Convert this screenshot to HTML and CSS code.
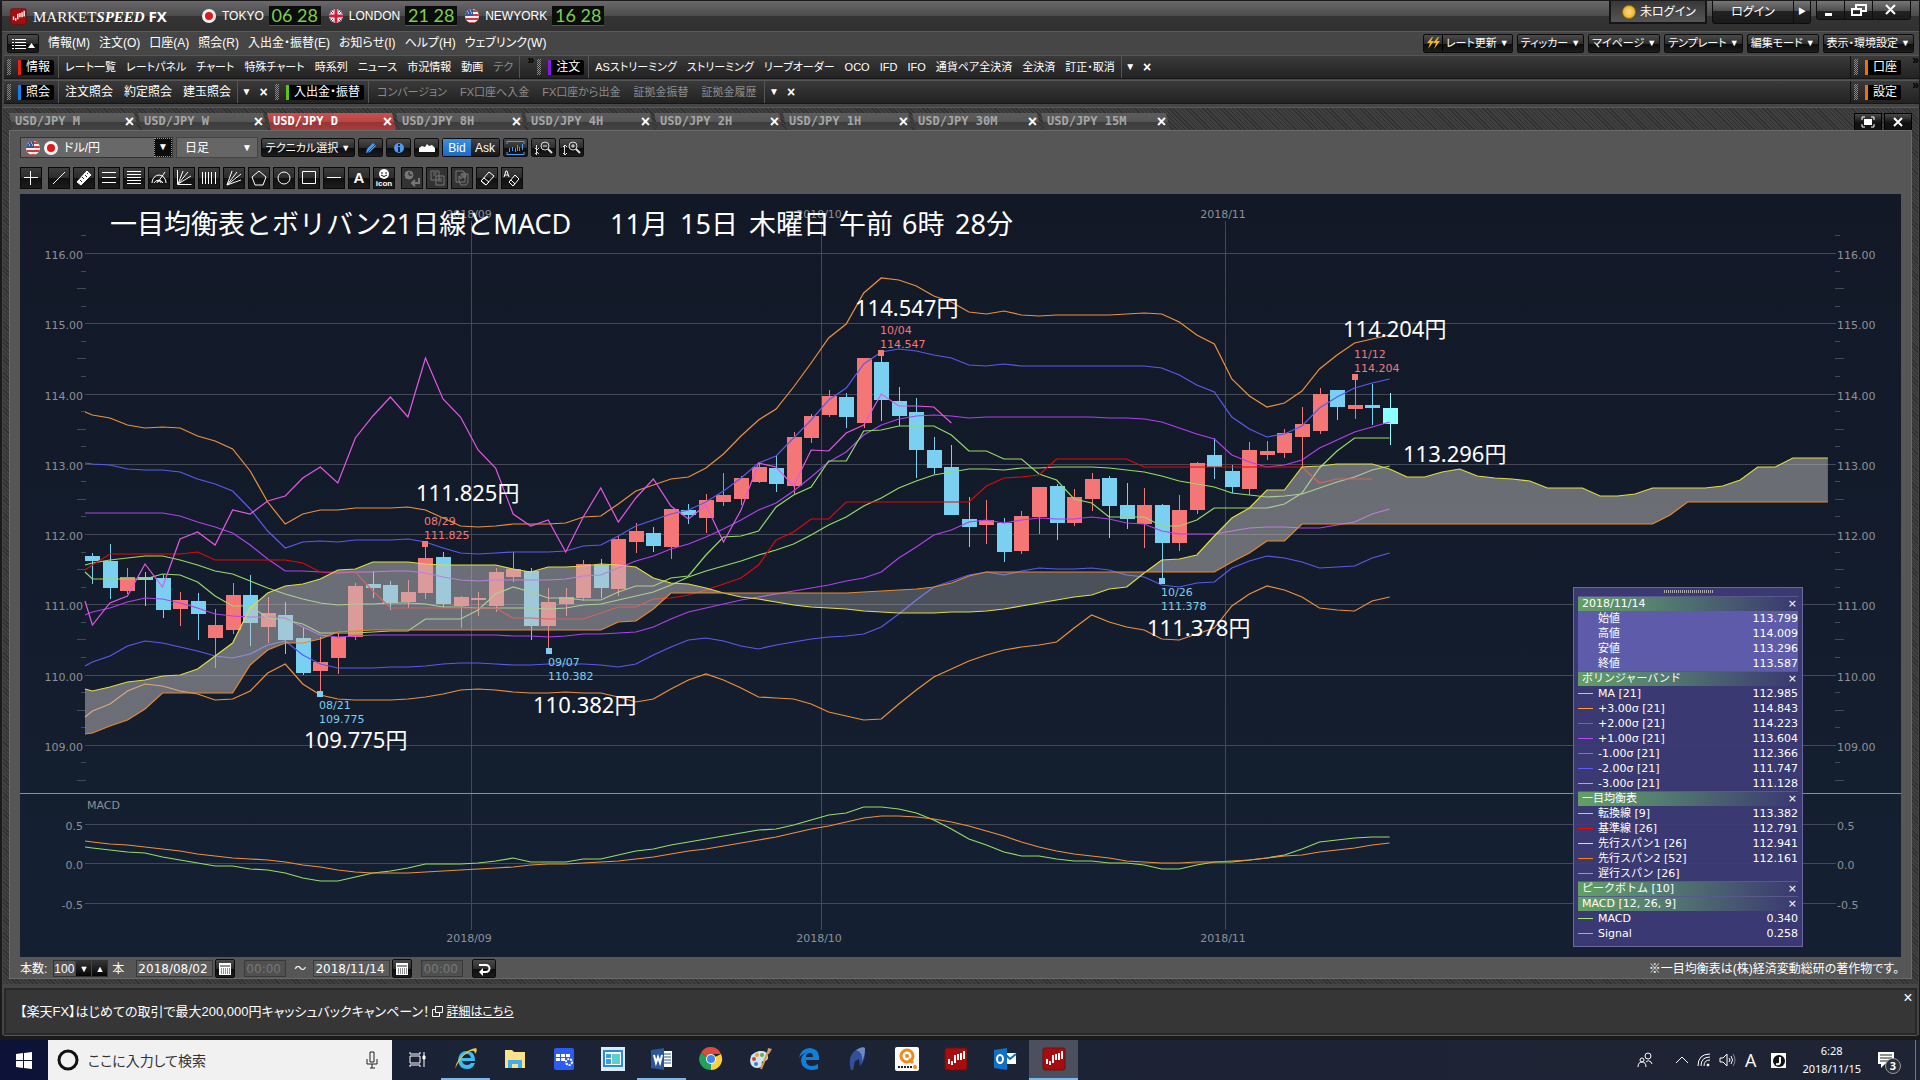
FILE: index.html
```html
<!DOCTYPE html>
<html lang="ja">
<head>
    <meta charset="UTF-8">
    <meta name="viewport" content="width=device-width, initial-scale=1.0">
    <title>MARKETSPEED FX</title>
    <link rel="stylesheet" href="styles.css">
</head>
<body>
    <svg class="defs" width="0" height="0">
        <defs>
            <clipPath id="round"><circle cx="8" cy="8" r="7"/></clipPath>
            <symbol id="flag-jp" viewBox="0 0 16 16">
                <circle cx="8" cy="8" r="7" fill="#f4f4f4"/><circle cx="8" cy="8" r="4" fill="#e01818"/>
            </symbol>
            <symbol id="flag-us" viewBox="0 0 16 16">
                <g clip-path="url(#round)">
                    <rect width="16" height="16" fill="#f4f0f0"/>
                    <path d="M0 3h16M0 7h16M0 11h16M0 15h16" stroke="#d03a3a" stroke-width="2"/>
                    <rect width="9" height="8" fill="#3458a0"/>
                    <path d="M3 3h1M6 3h1M4 5h1M7 5h1" stroke="#fff"/>
                </g>
            </symbol>
            <symbol id="flag-uk" viewBox="0 0 16 16">
                <g clip-path="url(#round)">
                    <rect width="16" height="16" fill="#28408c"/>
                    <path d="M0 0L16 16M16 0L0 16" stroke="#fff" stroke-width="3"/>
                    <path d="M0 0L16 16M16 0L0 16" stroke="#d02030" stroke-width="1"/>
                    <path d="M8 0V16M0 8H16" stroke="#fff" stroke-width="5"/>
                    <path d="M8 0V16M0 8H16" stroke="#d02030" stroke-width="3"/>
                </g>
            </symbol>
            <symbol id="ms-logo" viewBox="0 0 24 24">
                <rect x="1" y="1" width="22" height="22" rx="2" fill="#a80c0c" stroke="#6a1010"/>
                <path d="M5 12v5M8 14v4M11 8v8M14 7v6M17 6v7M20 4v8" stroke="#fff" stroke-width="2"/>
            </symbol>
            <symbol id="calendar" viewBox="0 0 18 16">
                <rect x="3" y="2" width="12" height="12" fill="#fff"/>
                <path d="M4 5h10" stroke="#222"/>
                <path d="M5 8h9M5 10h9M5 12h9" stroke="#222" stroke-dasharray="1 1"/>
            </symbol>
        </defs>
    </svg>

    <div class="app">
        <header class="titlebar">
            <svg class="logo" width="17" height="17"><use href="#ms-logo"/></svg>
            <h1>MARKET<em>SPEED</em> <b>FX</b></h1>
            <div class="clock"><svg width="16" height="16"><use href="#flag-jp"/></svg><span>TOKYO</span><time>06 28</time></div>
            <div class="clock"><svg width="16" height="16"><use href="#flag-uk"/></svg><span>LONDON</span><time>21 28</time></div>
            <div class="clock"><svg width="16" height="16"><use href="#flag-us"/></svg><span>NEWYORK</span><time>16 28</time></div>
            <div class="session">
                <div class="login-state"><i class="lamp"></i>未ログイン</div>
                <div class="split"><button class="login">ログイン</button><button class="login-more" aria-label="More">▶</button></div>
                <div class="split window-buttons">
                    <button aria-label="Minimize"><svg width="27" height="18"><path d="M8 12h7v3h-7z" fill="#fff"/></svg></button>
                    <button aria-label="Restore"><svg width="27" height="18" fill="none" stroke="#fff" stroke-width="2"><path d="M11 7V4h10v6h-4M7 8h9v6H7z"/></svg></button>
                    <button aria-label="Close"><svg width="37" height="18" stroke="#fff" stroke-width="2"><path d="M13 4l9 9M22 4l-9 9"/></svg></button>
                </div>
            </div>
        </header>

        <nav class="menubar">
            <button class="black menu-toggle" aria-label="Menu"><svg width="30" height="16" stroke="#fff"><path d="M7 4.5h11M7 7.5h11M7 10.5h11M7 13.5h11M4 4.5h2M4 7.5h2M4 10.5h2M4 13.5h2"/><path d="M20 13h7l-3.5-5z" fill="#fff" stroke="none"/></svg></button>
            <a href="#">情報(M)</a>
            <a href="#">注文(O)</a>
            <a href="#">口座(A)</a>
            <a href="#">照会(R)</a>
            <a href="#">入出金・振替(E)</a>
            <a href="#">お知らせ(I)</a>
            <a href="#">ヘルプ(H)</a>
            <a href="#">ウェブリンク(W)</a>
            <div class="menu-right">
                <button class="black rate"><svg width="18" height="18"><path d="M8 3L3 9h3l-2 6 6-8H7l2-4zM14 3L9 9h3l-2 6 6-8h-3l2-4z" fill="#f0b820"/></svg><span>レート更新</span><i>▼</i></button>
                <button class="black">ティッカー<i>▼</i></button>
                <button class="black">マイページ<i>▼</i></button>
                <button class="black">テンプレート<i>▼</i></button>
                <button class="black">編集モード<i>▼</i></button>
                <button class="black">表示・環境設定<i>▼</i></button>
            </div>
        </nav>

        <div class="toolbar">
            <i class="grip"></i>
            <strong class="label red">情報</strong>
            <div class="links small">
                <a href="#">レート一覧</a><a href="#">レートパネル</a><a href="#">チャート</a><a href="#">特殊チャート</a><a href="#">時系列</a><a href="#">ニュース</a><a href="#">市況情報</a><a href="#">動画</a><a href="#" class="off">テク</a>
            </div>
            <span class="more">»</span>
            <i class="grip"></i>
            <strong class="label purple">注文</strong>
            <div class="links small">
                <a href="#">ASストリーミング</a><a href="#">ストリーミング</a><a href="#">リーブオーダー</a><a href="#">OCO</a><a href="#">IFD</a><a href="#">IFO</a><a href="#">通貨ペア全決済</a><a href="#">全決済</a><a href="#">訂正・取消</a>
            </div>
            <button class="bar-button">▼</button><button class="bar-button close">×</button>
            <div class="toolbar-end"><i class="grip"></i><strong class="label orange">口座</strong><span class="more">»</span></div>
        </div>
        <div class="toolbar">
            <i class="grip"></i>
            <strong class="label blue">照会</strong>
            <div class="links">
                <a href="#">注文照会</a><a href="#">約定照会</a><a href="#">建玉照会</a>
            </div>
            <button class="bar-button">▼</button><button class="bar-button close">×</button>
            <i class="grip"></i>
            <strong class="label green">入出金・振替</strong>
            <div class="links small wide off">
                <a href="#">コンバージョン</a><a href="#">FX口座へ入金</a><a href="#">FX口座から出金</a><a href="#">証拠金振替</a><a href="#">証拠金履歴</a>
            </div>
            <button class="bar-button">▼</button><button class="bar-button close">×</button>
            <div class="toolbar-end"><i class="grip"></i><strong class="label orange">設定</strong><span class="more">»</span></div>
        </div>

        <main class="workspace">
            <div class="tabs">
                <div class="tab"><span>USD/JPY M</span><button aria-label="Close">×</button></div>
                <div class="tab"><span>USD/JPY W</span><button aria-label="Close">×</button></div>
                <div class="tab active"><span>USD/JPY D</span><button aria-label="Close">×</button></div>
                <div class="tab"><span>USD/JPY 8H</span><button aria-label="Close">×</button></div>
                <div class="tab"><span>USD/JPY 4H</span><button aria-label="Close">×</button></div>
                <div class="tab"><span>USD/JPY 2H</span><button aria-label="Close">×</button></div>
                <div class="tab"><span>USD/JPY 1H</span><button aria-label="Close">×</button></div>
                <div class="tab"><span>USD/JPY 30M</span><button aria-label="Close">×</button></div>
                <div class="tab"><span>USD/JPY 15M</span><button aria-label="Close">×</button></div>
                <div class="tab-tools">
                    <button aria-label="Full screen"><svg width="26" height="16" fill="none" stroke="#fff"><path d="M7 6V3h3M16 3h3v3M19 10v3h-3M10 13H7v-3"/><path d="M9 5h8v6H9z" fill="#fff" stroke="none"/></svg></button>
                    <button aria-label="Close"><svg width="26" height="16" stroke="#fff" stroke-width="2"><path d="M9 4l8 8M17 4l-8 8"/></svg></button>
                </div>
            </div>

            <section class="panel">
                <div class="tools">
                    <div class="pair">
                        <svg width="16" height="16"><use href="#flag-us"/></svg><svg width="16" height="16"><use href="#flag-jp"/></svg>
                        <select aria-label="通貨ペア"><option>ドル/円</option></select>
                        <i class="arrow">▼</i>
                    </div>
                    <div class="period"><select aria-label="足種"><option>日足</option></select><i>▼</i></div>
                    <button class="black technical">テクニカル選択 <i>▼</i></button>
                    <button class="black icon" aria-label="Draw"><svg width="23" height="18"><path d="M7 14l1-4 6-6 3 3-6 6z" fill="#4a9af0"/><path d="M8 14l8-8" stroke="#1a4a90"/></svg></button>
                    <button class="black icon" aria-label="Info"><svg width="23" height="18"><circle cx="12" cy="9" r="5" fill="#4a9af0"/><path d="M12 5v2M12 8v5" stroke="#10243c" stroke-width="2"/></svg></button>
                    <button class="black icon" aria-label="Area"><svg width="23" height="18"><path d="M4 13V9l3-2 3 1 2-3 2 2 3-1 3 3v4z" fill="#fff"/></svg></button>
                    <div class="bidask"><button class="on">Bid</button><button>Ask</button></div>
                    <button class="black icon" aria-label="Candles"><svg width="23" height="18" stroke="#4a9af0" fill="none"><path d="M3 5V2.500h17V5M3 13v2.500h17V13M5.500 9v4M8.500 8v4M11.500 9v4M13.500 6v6M15.500 8v4M18.500 5v6"/></svg></button>
                    <button class="black icon" aria-label="Zoom out"><svg width="23" height="18" stroke="#ddd" fill="none"><circle cx="13" cy="7" r="4"/><path d="M16 10l4 4" stroke-width="2"/><path d="M11 7h4M4.500 6v10M3 9l2 2 2-2M3 15l2-2 2 2"/></svg></button>
                    <button class="black icon" aria-label="Zoom in"><svg width="23" height="18" stroke="#ddd" fill="none"><circle cx="13" cy="7" r="4"/><path d="M16 10l4 4" stroke-width="2"/><path d="M11 7h4M13 5v4M4.500 6v10M3 8l2-2 2 2M3 14l2 2 2-2"/></svg></button>
                </div>
                <div class="tools draw">
                    <button aria-label="Cross"><svg viewBox="0 0 20 20"><path d="M9.500 3v14M3 9.500h14"/></svg></button>
                    <span class="gap"></span>
                    <button aria-label="Line"><svg viewBox="0 0 20 20"><path d="M4 16L16 4"/></svg></button>
                    <button aria-label="Ruler"><svg viewBox="0 0 20 20"><path d="M3 14L13 3l4 4L7 17z" fill="#fff"/><path d="M6 12l2 2M8 9l2 2M11 7l2 2M13 5l1 1" stroke="#222"/></svg></button>
                    <button aria-label="Three lines"><svg viewBox="0 0 20 20"><path d="M3 4.500h14M3 9.500h14M3 14.500h14"/></svg></button>
                    <button aria-label="Five lines"><svg viewBox="0 0 20 20"><path d="M3 3.500h14M3 6.500h14M3 9.500h14M3 12.500h14M3 15.500h14"/></svg></button>
                    <button aria-label="Arcs"><svg viewBox="0 0 20 20"><path d="M3 15a7 8 0 0 1 14 0M5 15a5 5 0 0 1 9 0M8 15a2 2 0 0 1 4 0M9 14l7-10"/></svg></button>
                    <button aria-label="Fan"><svg viewBox="0 0 20 20"><path d="M3.500 2v14.500h14M4 16L9 3M4 16L14 4M4 16L17 8"/></svg></button>
                    <button aria-label="Time zones"><svg viewBox="0 0 20 20"><path d="M3.500 4v12M6.500 4v12M9.500 4v12M12.500 4v12M16.500 4v12"/></svg></button>
                    <button aria-label="Gann fan"><svg viewBox="0 0 20 20"><path d="M3 17L8 3M3 17L13 4M3 17L17 6M3 17l14-5"/></svg></button>
                    <button aria-label="Pentagon"><svg viewBox="0 0 20 20"><path d="M10 3l7 6-3 8H6L3 9z"/></svg></button>
                    <button aria-label="Circle"><svg viewBox="0 0 20 20"><circle cx="10" cy="10" r="6"/></svg></button>
                    <button aria-label="Square"><svg viewBox="0 0 20 20"><path d="M3.500 3.500h13v12h-13z"/></svg></button>
                    <button aria-label="Horizontal line"><svg viewBox="0 0 20 20"><path d="M3 9.500h14"/></svg></button>
                    <button class="letter">A</button>
                    <button class="stamp"><svg viewBox="0 0 20 12"><circle cx="10" cy="6" r="5" fill="#fff" stroke="none"/><path d="M8 4v2M12 4v2M7 7q3 3 6 0" stroke="#111"/></svg><small>icon</small></button>
                    <span class="gap"></span>
                    <button disabled aria-label="History"><svg viewBox="0 0 20 20"><circle cx="7" cy="7" r="4" fill="#777"/><path d="M7 4v3h3" stroke="#222"/><path d="M17 10v5h-6M13 12l-3 3 3 3" stroke-width="2"/></svg></button>
                    <button disabled aria-label="Copy"><svg viewBox="0 0 20 20"><path d="M4 3h8v9H4zM9 8h8v9H9zM11 11h4M11 13h4M6 5h4M6 7h3"/></svg></button>
                    <button disabled aria-label="Move"><svg viewBox="0 0 20 20"><path d="M4 3h7l2 2v9H4zM9 17l-2-4V8l2 3V6h2v4V5h2v5l1-4h2v8l-2 3z"/></svg></button>
                    <button aria-label="Erase"><svg viewBox="0 0 20 20"><path d="M4 13l8-9 5 4-8 9zM4 13l3-3 5 4-3 3z"/></svg></button>
                    <button aria-label="Erase all"><svg viewBox="0 0 20 20"><path d="M7 14l6-7 4 4-6 7zM7 14l2-2 4 4-2 2z"/><path d="M2 9l2-6h1l2 6M3 7h3"/></svg></button>
                </div>

                <div class="chart">
                    <svg id="chart" viewBox="20 194 1881 763"></svg>
                    <aside class="legend">
                        <i class="handle"></i>
                        <table>
                            <tbody class="ohlc">
                                <tr class="head"><th colspan="2">2018/11/14</th><td><button>×</button></td></tr>
                                <tr><td></td><th>始値</th><td>113.799</td></tr>
                                <tr><td></td><th>高値</th><td>114.009</td></tr>
                                <tr><td></td><th>安値</th><td>113.296</td></tr>
                                <tr><td></td><th>終値</th><td>113.587</td></tr>
                            </tbody>
                            <tbody>
                                <tr class="head"><th colspan="2">ボリンジャーバンド</th><td><button>×</button></td></tr>
                                <tr><td class="key lime"></td><th>MA [21]</th><td>112.985</td></tr>
                                <tr><td class="key amber"></td><th>+3.00σ [21]</th><td>114.843</td></tr>
                                <tr><td class="key indigo"></td><th>+2.00σ [21]</th><td>114.223</td></tr>
                                <tr><td class="key violet"></td><th>+1.00σ [21]</th><td>113.604</td></tr>
                                <tr><td class="key violet"></td><th>-1.00σ [21]</th><td>112.366</td></tr>
                                <tr><td class="key indigo"></td><th>-2.00σ [21]</th><td>111.747</td></tr>
                                <tr><td class="key amber"></td><th>-3.00σ [21]</th><td>111.128</td></tr>
                            </tbody>
                            <tbody>
                                <tr class="head"><th colspan="2">一目均衡表</th><td><button>×</button></td></tr>
                                <tr><td class="key lime"></td><th>転換線 [9]</th><td>113.382</td></tr>
                                <tr><td class="key crimson"></td><th>基準線 [26]</th><td>112.791</td></tr>
                                <tr><td class="key yellow"></td><th>先行スパン1 [26]</th><td>112.941</td></tr>
                                <tr><td class="key deep"></td><th>先行スパン2 [52]</th><td>112.161</td></tr>
                                <tr><td class="key pink"></td><th>遅行スパン [26]</th><td></td></tr>
                            </tbody>
                            <tbody>
                                <tr class="head"><th colspan="2">ピークボトム [10]</th><td><button>×</button></td></tr>
                                <tr class="head"><th colspan="2">MACD [12, 26, 9]</th><td><button>×</button></td></tr>
                                <tr><td class="key lime"></td><th>MACD</th><td>0.340</td></tr>
                                <tr><td class="key amber"></td><th>Signal</th><td>0.258</td></tr>
                            </tbody>
                        </table>
                    </aside>
                </div>

                <form class="range">
                    <label for="bars">本数:</label>
                    <div class="stepper"><input id="bars" type="text" value="100"><button type="button">▼</button><button type="button">▲</button></div>
                    <span class="unit">本</span>
                    <input class="date" type="text" value="2018/08/02" aria-label="開始日">
                    <button type="button" class="black cal" aria-label="Calendar"><svg width="18" height="16"><use href="#calendar"/></svg></button>
                    <input class="time" type="text" value="00:00" disabled aria-label="開始時刻">
                    <span class="tilde">～</span>
                    <input class="date" type="text" value="2018/11/14" aria-label="終了日">
                    <button type="button" class="black cal" aria-label="Calendar"><svg width="18" height="16"><use href="#calendar"/></svg></button>
                    <input class="time" type="text" value="00:00" disabled aria-label="終了時刻">
                    <button type="submit" class="black apply" aria-label="Apply"><svg width="22" height="16" fill="none" stroke="#fff" stroke-width="2"><path d="M6 4h7a3 3 0 0 1 0 7H8"/><path d="M10 7v8l-4-4z" fill="#fff" stroke="none"/></svg></button>
                    <p class="note">※一目均衡表は(株)経済変動総研の著作物です。</p>
                </form>
            </section>
        </main>

        <footer class="ticker">
            <p>【楽天FX】はじめての取引で最大200,000円キャッシュバックキャンペーン！ <svg width="11" height="11" fill="none" stroke="#fff"><path d="M3.500 .500h7v6h-7zM3 3.500H.500v7h7V7"/></svg><a href="#">詳細はこちら</a></p>
            <button aria-label="Close">×</button>
        </footer>
    </div>

    <div class="taskbar">
        <button class="start" aria-label="Start"><svg width="18" height="18" fill="#fff"><path d="M1 3l7-1v7H1zM9 2l8-1v8H9zM1 10h7v7l-7-1zM9 10h8v8l-8-1z"/></svg></button>
        <div class="search">
            <svg width="22" height="24" fill="none"><circle cx="11" cy="12" r="9" stroke="#111" stroke-width="3"/></svg>
            <input type="text" placeholder="ここに入力して検索" aria-label="検索">
            <svg width="14" height="20" fill="none" stroke="#222"><path d="M5 2h4v10H5zM2 9v5h10V9M7 14v4M5 18h5"/></svg>
        </div>
        <div class="apps">
            <button class="view" aria-label="Task view"><svg width="18" height="18" fill="none" stroke="#fff"><path d="M2 2v2h10V2M2 6h10v7H2zM2 17v-2h10v2M16 2v4M16 9v8"/><path d="M15 6h2v3h-2z" fill="#fff"/></svg></button>
            <button class="run" aria-label="Internet Explorer"><svg width="26" height="26"><path d="M22 15H9q1 4 5 4 3 0 4-2h4q-2 6-8 6-8 0-9-9 1-9 9-9 8 0 8 10zM9 12h9q-1-4-4-4-4 0-5 4z" fill="#3cbcf0"/><path d="M3 23Q1 19 8 11T23 2q2 2-1 6 0-4-4-3Q12 7 7 14t-4 9z" fill="#f5c830"/></svg></button>
            <button aria-label="Explorer"><svg width="26" height="24"><path d="M3 3h7l2 2h11v16H3z" fill="#ffe08a"/><path d="M6 21v-8h14v8h-4v-4h-6v4z" fill="#3cb0ea"/></svg></button>
            <button aria-label="Settings"><svg width="24" height="24"><rect x="2" y="1" width="20" height="22" rx="2" fill="#2c5cf0"/><path d="M4 7h4v3H4zM9 7h4v3H9zM14 7h4v3h-4zM4 11h4v3H4zM9 11h4v3H9z" fill="#fff"/><circle cx="17" cy="15" r="3" fill="none" stroke="#fff" stroke-width="2" stroke-dasharray="2 1"/></svg></button>
            <button aria-label="Layout"><svg width="24" height="24"><rect width="24" height="24" fill="#dcebfa"/><rect x="3" y="4" width="18" height="15" fill="#fff" stroke="#2a8ae0" stroke-width="2"/><path d="M5 7h5v4H5zM5 12h5v5H5z" fill="#38a0e8"/><path d="M11 7h8v10h-8z" fill="#5ed0c8"/></svg></button>
            <button class="run" aria-label="Word"><svg width="24" height="24"><path d="M12 4h10v16H12z" fill="#fff"/><path d="M14 7h7M14 10h7M14 13h7M14 16h7" stroke="#2b5797"/><path d="M1 3l13-2v22L1 21z" fill="#2b5797"/><path d="M4 8l2 8 2-6 2 6 2-8" stroke="#fff" stroke-width="2" fill="none"/></svg></button>
            <button aria-label="Chrome"><svg width="24" height="24"><path d="M12 12L2 6A11 11 0 0 1 22 7H12z" fill="#dd4b3e"/><path d="M12 12l10-5a11 11 0 0 1-10 16z" fill="#fdd03b"/><path d="M12 12v11A11 11 0 0 1 2 6z" fill="#24a05a"/><circle cx="12" cy="12" r="5" fill="#fff"/><circle cx="12" cy="12" r="4" fill="#3f86f0"/></svg></button>
            <button aria-label="Paint"><svg width="26" height="26"><path d="M3 15Q3 7 12 5q9-1 9 6 0 4-4 4-3 0-2 3 0 4-5 4-6 0-7-7z" fill="#cfe4f4"/><circle cx="7" cy="13" r="2" fill="#d04040"/><circle cx="10" cy="9" r="2" fill="#f0a030"/><circle cx="15" cy="9" r="2" fill="#58b048"/><circle cx="9" cy="18" r="2" fill="#3880d0"/><path d="M14 23l7-17" stroke="#e09840" stroke-width="2"/><path d="M20 7l1-5 4 1-3 5z" fill="#caa070"/></svg></button>
            <button aria-label="Edge"><svg width="24" height="24"><path d="M2 11Q4 1 13 1q9 1 9 9v3H9q0 6 6 6 3 0 6-2v5q-3 1-7 1-9-1-10-9 0-6 5-8-5 1-7 5zM9 10h7q0-4-3-4-4 0-4 4z" fill="#0f7fdc"/></svg></button>
            <button aria-label="Feather"><svg width="24" height="26"><path d="M5 24Q1 10 10 4q6-4 9-2 1 12-5 18l-1-7-4 2-2 9z" fill="#34509c"/><path d="M10 4q6-4 9-2 0 8-3 13Q17 6 10 4z" fill="#6a8cc0"/></svg></button>
            <button aria-label="Chart Q"><svg width="24" height="24"><rect width="24" height="24" rx="2" fill="#fff"/><circle cx="12" cy="9" r="6" fill="none" stroke="#f08a18" stroke-width="3"/><circle cx="12" cy="9" r="2" fill="#f08a18"/><path d="M14 12l4 4" stroke="#f08a18" stroke-width="3"/><path d="M3 20h14" stroke="#222" stroke-width="2" stroke-dasharray="2 1"/><circle cx="20" cy="20" r="2" fill="#f08a18"/></svg></button>
            <button aria-label="Market Speed"><svg width="24" height="24"><use href="#ms-logo"/></svg></button>
            <button aria-label="Outlook"><svg width="24" height="24"><path d="M12 6h11v11H12z" fill="#fff"/><path d="M13 8l4 4 6-5" stroke="#0a6cc0" stroke-width="2" fill="none"/><path d="M1 3l13-2v22L1 21z" fill="#0f70c8"/><ellipse cx="7" cy="12" rx="3" ry="4" fill="none" stroke="#fff" stroke-width="2"/></svg></button>
            <button class="current" aria-label="Market Speed FX"><svg width="24" height="24"><use href="#ms-logo"/></svg></button>
        </div>
        <div class="tray">
            <svg class="people" width="18" height="18" fill="none" stroke="#fff"><circle cx="11" cy="5" r="3"/><circle cx="5" cy="9" r="2"/><path d="M1 16q0-5 4-5t4 5M9 11q2-3 5 0l1 2"/></svg>
            <svg width="14" height="10" fill="none" stroke="#fff"><path d="M1 8l6-6 6 6"/></svg>
            <svg width="14" height="14" fill="none" stroke="#fff"><path d="M1 13Q1 1 13 1M4 13Q4 4 13 4M7 13q0-6 6-6"/><circle cx="11" cy="12" r="1" fill="#fff"/></svg>
            <svg width="18" height="16" fill="none" stroke="#fff"><path d="M1 6h3l4-4v12l-4-4H1zM10 6q2 2 0 4M12 4q3 4 0 8"/><path d="M14 2q4 6 0 12" stroke="#889"/></svg>
            <span class="ime">A</span>
            <svg width="15" height="15"><rect width="15" height="15" fill="#fff"/><circle cx="8" cy="8" r="6" fill="#111"/><path d="M9 4v5q0 3-4 2" stroke="#fff" stroke-width="2" fill="none"/></svg>
            <time>6:28<br>2018/11/15</time>
            <div class="notice"><svg width="18" height="18"><path d="M1 1h16v12H8l-4 4v-4H1z" fill="#fff"/><path d="M3 4h12M3 7h12M3 10h8" stroke="#222"/></svg><b>3</b></div>
        </div>
    </div>
    <script src="script.js"></script>
</body>
</html>
```
FILE: styles.css
```css
/* General Styles */
* {
    box-sizing: border-box;
}

body {
    margin: 0;
    min-height: 100vh;
    display: flex;
    flex-direction: column;
    background-color: #1d2334;
    color: #ffffff;
    font: 12px/16px "Liberation Sans", "Noto Sans CJK JP", sans-serif;
    font-feature-settings: "palt";
}

button, input, select {
    margin: 0;
    padding: 0;
    border: none;
    background: none;
    color: inherit;
    font: inherit;
    font-feature-settings: inherit;
}

button {
    cursor: pointer;
}

a {
    color: inherit;
    text-decoration: none;
    white-space: nowrap;
}

i {
    font-style: normal;
}

svg {
    display: block;
    flex: none;
}

.defs {
    position: absolute;
}

.app {
    flex: 1;
    display: flex;
    flex-direction: column;
    background-color: #464646;
    border: 1px solid #1a1a1a;
    border-width: 1px 1px 5px 2px;
    border-radius: 4px 4px 0 0;
}

/* Title bar */
.titlebar {
    height: 31px;
    display: flex;
    align-items: center;
    padding-left: 8px;
    background: linear-gradient(#6a686a 0, #4c4c4c 15px, #343434 15px, #303030 31px);
    border-bottom: 1px solid #5a5a5a;
}

.titlebar h1 {
    width: 153px;
    margin: 0 0 0 6px;
    font: 15px/20px "Liberation Serif", serif;
    white-space: nowrap;
}

.titlebar em {
    font-weight: bold;
}

.titlebar h1 b {
    font-family: "Open Sans", sans-serif;
}

.clock {
    display: flex;
    align-items: center;
    gap: 5px;
    margin-left: 7px;
    line-height: 20px;
}

.logo + h1 + .clock {
    margin-left: 15px;
}

.clock time {
    width: 52px;
    background-color: #0c0c0c;
    border-bottom: 1px solid #555;
    color: #7ad04c;
    font: 18px/19px Lato, sans-serif;
    text-align: center;
}

.session {
    margin-left: auto;
    margin-right: 8px;
    align-self: flex-start;
    display: flex;
    align-items: flex-start;
    gap: 5px;
}

.login-state {
    width: 98px;
    height: 23px;
    display: flex;
    align-items: center;
    gap: 4px;
    padding-left: 11px;
    border: 2px solid #151515;
    border-top: none;
    background: linear-gradient(#383838, #555);
}

.lamp {
    width: 14px;
    height: 14px;
    border-radius: 50%;
    border: 1px solid #a07008;
    background: radial-gradient(#ffe080, #e8a010);
}

.split {
    display: flex;
    gap: 1px;
    padding: 0 1px 1px;
    background-color: #0d0d0d;
    border-radius: 0 0 3px 3px;
}

.split button {
    background: linear-gradient(#777 0, #4c4c4c 10px, #222 10px, #1a1a1a);
}

.split .login {
    width: 80px;
    height: 22px;
}

.login-more {
    width: 16px;
    font-size: 8px;
}

/* Menu bar */
.menubar {
    height: 22px;
    display: flex;
    align-items: center;
    gap: 9px;
    padding: 0 5px;
}

.black {
    display: flex;
    align-items: center;
    justify-content: center;
    height: 19px;
    border: 1px solid #0c0c0c;
    border-radius: 2px;
    background: linear-gradient(#4a4a4a 0, #2c2c2c 9px, #0c0c0c 9px, #1c1c1c);
    white-space: nowrap;
}

.black i {
    font-size: 9px;
    margin-left: 3px;
}

.menu-right {
    margin-left: auto;
    display: flex;
    gap: 4px;
    font-size: 11px;
}

.menu-right .black {
    padding: 0 3px;
}

.menu-right .rate {
    padding-left: 0;
}

.rate span {
    padding-left: 3px;
    border-left: 1px solid #000;
}

/* Toolbars */
.toolbar {
    height: 24px;
    margin: 1px 0 0 2px;
    display: flex;
    align-items: center;
    background: linear-gradient(#3a3a3a, #222);
    border-top: 1px solid #555;
    border-bottom: 1px solid #161616;
}

.grip {
    width: 4px;
    height: 16px;
    margin: 0 6px 0 3px;
    background: repeating-conic-gradient(#8a8a8a 0 25%, transparent 0 50%) 0 0 / 2px 2px;
}

.label {
    margin: 0 4px 0 1px;
    padding: 0 4px 0 5px;
    border-left: 3px solid;
    border-radius: 0 2px 2px 0;
    background-color: #000;
    font-weight: normal;
    line-height: 15px;
    white-space: nowrap;
}

.label.red { border-color: #f02010; }
.label.purple { border-color: #8818e8; }
.label.blue { border-color: #1080f0; }
.label.green { border-color: #58c810; }
.label.orange { border-color: #f07000; }

.links {
    display: flex;
    gap: 11px;
    height: 22px;
    align-items: center;
    padding: 0 6px;
    border-left: 1px solid #555;
    border-right: 1px solid #555;
}

.links.small {
    gap: 10px;
    font-size: 11px;
}

.links.wide {
    gap: 13px;
    padding: 0 8px;
}

.off {
    color: #8c8c8c;
}

.more {
    width: 14px;
    color: #000;
    font-weight: bold;
    line-height: 8px;
    align-self: flex-start;
    text-align: right;
}

.bar-button {
    width: 17px;
    font-size: 10px;
}

.close {
    font-size: 14px;
    font-weight: bold;
}

.toolbar-end {
    margin-left: auto;
    display: flex;
    align-items: center;
    height: 22px;
    border-left: 1px solid #111;
}

/* Workspace */
.workspace {
    flex: 1;
    display: flex;
    flex-direction: column;
    margin: 3px 1px 0 1px;
    padding: 5px 6px 5px;
    border-top: 1px solid #5a5a5a;
    background: repeating-linear-gradient(45deg, #303030 0, #303030 1px, #404040 1px, #404040 3px);
}

.tabs {
    display: flex;
    align-items: flex-end;
    height: 17px;
}

.tab {
    width: 129px;
    height: 17px;
    display: flex;
    align-items: center;
    justify-content: space-between;
    padding: 0 4px 0 6px;
    background: linear-gradient(#5c5c5c 0, #555 9px, #3c3c3c 9px, #444);
    clip-path: polygon(0 0, 125px 0, 100% 100%, 4px 100%);
    color: #a6a6a6;
    font: bold 12px/17px "DejaVu Sans Mono", monospace;
}

.tab.active {
    background: linear-gradient(#c85050 0, #b84444 9px, #963434 9px, #a83c3c);
    color: #fff;
}

.tab button {
    color: #fff;
    font: bold 16px/16px "Liberation Sans", sans-serif;
}

.tab-tools {
    display: flex;
    gap: 2px;
    margin-left: auto;
}

.tab-tools button {
    border: 1px solid #000;
    border-bottom: none;
    background: linear-gradient(#4a4a4a 0, #111 9px);
}

.panel {
    flex: 1;
    padding: 6px 10px 0;
    background-color: #565656;
    border: 1px solid #6a6a6a;
}

.tools {
    display: flex;
    gap: 3px;
    height: 21px;
    align-items: center;
}

.tools.draw {
    margin: 9px 0 5px;
    height: 22px;
}

.pair {
    width: 153px;
    height: 21px;
    display: flex;
    align-items: center;
    gap: 2px;
    padding-left: 4px;
    border: 1px solid #333;
    background-color: #686868;
}

.pair select, .period select {
    flex: 1;
    min-width: 0;
    appearance: none;
    padding-left: 3px;
}

.arrow {
    width: 18px;
    align-self: stretch;
    border: 1px dotted #999;
    background-color: #0c0c0c;
    font-size: 10px;
    text-align: center;
}

.period {
    width: 82px;
    height: 21px;
    display: flex;
    align-items: center;
    padding: 0 5px;
    border: 1px solid #444;
    background-color: #666;
}

.period i {
    font-size: 10px;
}

.technical {
    width: 94px;
    font-size: 11px;
}

.icon {
    width: 25px;
}

.bidask {
    display: flex;
    border: 1px solid #0c0c0c;
    border-radius: 2px;
}

.bidask button {
    width: 28px;
    height: 17px;
    background: linear-gradient(#444, #161616);
}

.bidask .on {
    background: linear-gradient(#3a90e0, #1c6ac8);
}

.draw button {
    width: 22px;
    height: 22px;
    border: 1px solid #0a0a0a;
    background: linear-gradient(#3c3c3c 0, #2c2c2c 10px, #101010 10px, #1c1c1c);
}

.draw svg {
    width: 20px;
    fill: none;
    stroke: #fff;
}

.draw button:disabled {
    background: #333;
}

.draw :disabled svg {
    stroke: #777;
}

.gap {
    width: 0;
}

.draw .letter {
    font: bold 15px/20px "Liberation Sans", sans-serif;
}

.stamp small {
    display: block;
    font: bold 8px/8px "Liberation Sans", sans-serif;
}

/* Chart */
.chart {
    position: relative;
    background: linear-gradient(#121826, #142032);
}

#chart {
    width: 100%;
    height: auto;
}

.axis {
    fill: #8e9096;
    font: 11px "DejaVu Sans", sans-serif;
}

.peak {
    fill: #f47878;
    font: 11px "DejaVu Sans", sans-serif;
}

.bottom {
    fill: #7ad0ee;
    font: 11px "DejaVu Sans", sans-serif;
}

.price-note {
    fill: #fff;
    font: 22px "Noto Sans", "Noto Sans CJK JP", sans-serif;
}

.title-note {
    fill: #fff;
    font: 27px "Noto Sans", "Noto Sans CJK JP", sans-serif;
    font-feature-settings: normal;
}

.legend {
    position: absolute;
    right: 98px;
    bottom: 10px;
    width: 230px;
    padding: 8px 4px 5px;
    border: 1px solid #6a689c;
    background-color: rgba(62, 60, 120, 0.92);
    font: 11px/15px "DejaVu Sans", "Noto Sans CJK JP", sans-serif;
}

.handle {
    position: absolute;
    top: 2px;
    left: 90px;
    width: 50px;
    height: 3px;
    background: repeating-linear-gradient(90deg, #aaa 0, #aaa 1px, transparent 1px, transparent 2px);
}

.legend table {
    width: 100%;
    border-collapse: collapse;
}

.legend th, .legend td {
    height: 15px;
    padding: 0;
    font-weight: normal;
    text-align: left;
    white-space: nowrap;
}

.legend tr > :first-child {
    width: 20px;
}

.legend td:last-child {
    text-align: right;
}

.legend .ohlc {
    background-color: #5e5caa;
}

.legend .head {
    background: linear-gradient(90deg, #62a062, #557f70 35%, #3a3870);
    box-shadow: inset 0 1px #58588c;
}

.legend .head th {
    padding-left: 4px;
}

.legend button {
    line-height: 13px;
    padding-right: 1px;
}

.key {
    background: linear-gradient(currentColor, currentColor) 0 7px / 15px 1px no-repeat;
}

.lime { color: #a0e860; }
.amber { color: #ff9838; }
.indigo { color: #5c5cff; }
.violet { color: #b848f8; }
.crimson { color: #ff0000; }
.yellow { color: #ffe830; }
.deep { color: #ff8000; }
.pink { color: #f060f0; }

/* Date range */
.range {
    display: flex;
    align-items: center;
    padding-top: 2px;
}

.stepper {
    display: flex;
    margin: 0 4px 0 6px;
    height: 17px;
    border: 1px solid #333;
}

.stepper input {
    width: 21px;
    background-color: #555;
}

.stepper button {
    width: 16px;
    border-left: 1px solid #444;
    background: linear-gradient(#333, #050505);
    font-size: 9px;
}

.date, .time {
    height: 17px;
    padding: 0 1px;
    border: 1px solid #3a3a3a;
    background-color: #5c5c5c;
    font: 12px "DejaVu Sans", sans-serif;
}

.date {
    width: 77px;
}

.unit {
    margin-right: 12px;
}

.time {
    width: 42px;
    color: #777;
    background-color: #505050;
}

.cal {
    width: 20px;
    margin: 0 9px 0 2px;
}

.tilde {
    margin: 0 7px 0 8px;
    font-feature-settings: normal;
}

.apply {
    margin-left: 9px;
}

.note {
    margin: 0 2px 0 auto;
}

/* Campaign ticker */
.ticker {
    height: 47px;
    margin: 4px 2px 0;
    padding-left: 14px;
    display: flex;
    align-items: center;
    justify-content: space-between;
    background-color: #363636;
    border: 2px solid #282828;
    box-shadow: 0 1px #555;
}

.ticker p {
    display: flex;
    align-items: center;
    gap: 3px;
    margin: 0;
    font-size: 13px;
}

.ticker a {
    font-size: 12px;
    text-decoration: underline;
}

.ticker button {
    width: 14px;
    align-self: flex-start;
    font-size: 16px;
}

/* Taskbar */
.taskbar {
    height: 40px;
    display: flex;
    background: linear-gradient(90deg, #0c1238, #1b2336 450px, #1f2434);
}

.start {
    width: 48px;
    display: flex;
    align-items: center;
    justify-content: center;
}

.search {
    width: 344px;
    display: flex;
    align-items: center;
    padding: 0 13px 0 9px;
    background-color: #f1f1f1;
}

.search input {
    flex: 1;
    padding-left: 9px;
    font: 14px "Noto Sans CJK JP", sans-serif;
    font-feature-settings: "palt";
}

.search ::placeholder {
    color: #333;
    opacity: 1;
}

.apps {
    display: flex;
}

.apps button {
    width: 49px;
    display: flex;
    align-items: center;
    justify-content: center;
    border-bottom: 2px solid transparent;
}

.apps .run, .apps .current {
    border-color: #78b8f0;
}

.apps .current {
    background-color: #4c505e;
}

.tray {
    margin: 0 4px 0 auto;
    display: flex;
    align-items: center;
    gap: 8px;
    padding-right: 20px;
    border-right: 1px solid #777;
}

.people {
    margin-right: 12px;
}

.ime {
    margin-right: 7px;
    font: 18px/20px "Open Sans", sans-serif;
}

.tray time {
    margin: 0 8px;
    font: 11px/18px "Noto Sans", sans-serif;
    text-align: center;
}

.notice {
    position: relative;
}

.notice b {
    position: absolute;
    left: 8px;
    top: 7px;
    width: 16px;
    height: 16px;
    border: 1px solid #999;
    border-radius: 50%;
    background-color: #2c2f38;
    font: bold 11px/14px "Noto Sans", sans-serif;
    text-align: center;
}
```
FILE: script.js
```js
const svg = document.getElementById('chart');
const NS = 'http://www.w3.org/2000/svg';

const STEP = 17.53;
const LEFT = 92.4;
const EDGE = 85;
const x = i => LEFT + STEP * i;
const priceY = p => Math.round(253 + (116 - p) * 70.25) + 0.5;
const macdY = v => Math.round(863 - v * 79) + 0.5;

function add(tag, attrs, text) {
    const el = document.createElementNS(NS, tag);
    for (const key in attrs) el.setAttribute(key, attrs[key]);
    if (text) el.textContent = text;
    svg.appendChild(el);
    return el;
}

// [body top, body bottom, high, low, direction]
const candles = [
    [556,561,553,584,'d'],[561,588,544,599,'d'],[577,591,568,594,'u'],[577,580,572,606,'d'],[578,610,575,618,'d'],
    [600,609,592,626,'u'],[601,614,593,640,'d'],[625,638,609,668,'u'],[595,630,583,634,'u'],[595,623,575,646,'d'],
    [613,627,597,643,'u'],[615,640,602,654,'d'],[638,673,628,675,'d'],[662,671,637,692,'u'],[637,658,633,674,'u'],
    [586,637,583,640,'u'],[584,588,571,598,'d'],[585,603,581,610,'d'],[592,602,580,608,'u'],[558,593,544,599,'u'],
    [557,604,552,608,'d'],[597,606,596,628,'u'],[598,600,592,616,'u'],[572,606,568,612,'u'],[569,577,552,582,'u'],
    [571,626,568,640,'d'],[602,626,588,651,'u'],[597,604,588,616,'u'],[564,598,560,601,'u'],[565,588,559,598,'d'],
    [539,589,536,596,'u'],[531,542,523,553,'u'],[533,546,527,552,'d'],[509,547,509,559,'u'],[510,515,504,524,'d'],
    [500,518,494,533,'u'],[495,502,473,506,'u'],[478,499,476,505,'u'],[467,482,463,483,'u'],[468,484,455,492,'d'],
    [437,486,432,495,'u'],[416,438,414,443,'u'],[396,415,390,417,'u'],[397,417,393,428,'d'],[358,423,358,428,'u'],
    [362,400,352,421,'d'],[401,416,387,426,'d'],[412,450,398,478,'d'],[450,468,437,474,'d'],[467,515,445,515,'d'],
    [519,527,497,547,'d'],[520,525,500,544,'u'],[523,552,518,562,'d'],[516,551,511,554,'u'],[487,517,487,534,'u'],
    [486,523,484,540,'d'],[497,523,489,526,'u'],[479,499,473,511,'u'],[478,506,476,538,'d'],[505,519,483,529,'d'],
    [505,524,488,548,'u'],[505,543,504,582,'d'],[510,543,495,551,'u'],[463,510,462,514,'u'],[455,467,438,479,'d'],
    [471,487,465,493,'d'],[450,489,442,495,'u'],[451,455,441,460,'u'],[433,453,429,458,'u'],[424,437,407,467,'u'],
    [394,431,388,434,'u'],[390,407,390,420,'d'],[405,409,377,419,'u'],[405,408,384,425,'d'],[408,424,393,445,'n']
];

// each series starts with its value on the left edge
const series = [
    ['#f09038', [412,415,418,425,428,427,428,436,441,449,471,502,524,514,510,510,508,508,508,507,510,518,526,527,526,524,524,524,523,517,516,504,491,485,479,477,468,454,436,420,409,387,363,338,324,293,278,280,286,296,302,312,314,311,315,316,315,315,315,315,314,313,314,322,335,344,379,396,407,403,391,369,355,343,339,335]],
    ['#5a5af0', [463,464,465,469,470,470,472,479,484,491,509,531,548,542,541,542,540,540,540,539,542,548,553,554,553,552,552,552,551,546,545,536,526,520,514,510,502,491,478,463,456,438,420,400,388,364,352,349,351,355,358,365,366,364,366,366,366,366,366,366,366,366,368,375,385,392,417,429,437,434,426,408,397,388,383,379]],
    ['#b040f0', [513,513,513,513,513,513,516,522,527,533,545,559,571,571,572,573,572,572,571,571,573,577,580,581,580,580,580,580,579,576,575,568,561,556,549,544,537,529,520,510,503,491,477,462,452,435,425,419,416,415,416,418,417,417,417,417,417,417,417,418,418,419,422,428,434,439,455,462,467,465,460,448,440,432,427,422]],
    ['#96dc64', [565,563,560,558,556,556,560,565,571,574,581,588,594,599,603,605,604,604,603,603,604,607,607,608,608,608,608,609,608,605,604,600,596,592,585,577,571,566,561,555,550,544,535,525,517,506,498,488,481,475,472,469,469,470,468,468,467,467,467,468,470,472,476,481,484,487,493,495,497,496,494,488,482,477,470,466]],
    ['#b040f0', [615,612,608,602,598,599,603,608,614,616,617,617,618,627,635,637,636,635,635,635,635,635,635,635,635,636,636,637,636,634,634,633,632,627,619,612,608,604,600,597,594,591,588,585,581,578,572,558,547,535,530,522,520,523,520,518,519,519,517,519,523,524,531,534,534,534,531,528,527,527,528,528,525,522,514,509]],
    ['#5a5af0', [666,662,656,646,641,643,647,651,656,658,654,645,641,655,664,668,668,668,667,667,666,664,663,663,664,665,665,664,664,664,665,667,664,655,647,640,638,641,646,649,645,642,639,637,636,634,627,614,600,587,581,575,572,575,571,568,569,569,568,570,575,577,585,587,583,582,568,561,556,558,562,568,567,566,558,553]],
    ['#f09038', [717,711,704,691,684,686,691,694,700,699,691,673,664,684,695,699,700,700,700,699,697,694,690,689,690,692,693,693,692,693,693,697,702,699,689,680,674,680,688,697,698,699,704,712,716,720,719,704,690,677,669,661,655,650,647,645,642,628,615,622,627,630,639,640,634,628,606,594,586,590,597,608,610,611,601,597]],
    ['#96dc64', [572,579,579,579,579,574,575,582,596,606,606,618,620,624,633,633,633,632,631,631,619,619,619,610,594,587,592,598,598,600,600,592,586,586,578,576,555,537,536,531,507,495,487,461,461,431,430,426,426,426,435,451,451,459,459,474,480,499,503,517,517,517,526,526,520,508,508,508,508,504,493,468,451,438,438,438]],
    ['#e00808', [570,565,554,554,554,554,554,552,560,560,560,560,560,563,572,572,572,591,608,608,608,608,608,608,608,618,618,619,619,619,613,607,607,599,598,595,590,584,578,565,540,532,519,519,502,502,502,502,502,502,502,502,486,478,477,475,459,459,459,459,459,467,467,467,467,467,467,467,467,467,467,483,479,479,479]],
    ['#e458e4', [601,625,603,596,564,587,539,532,545,510,514,501,496,478,467,483,438,416,397,417,358,399,417,450,468,514,526,520,552,517,488,522,498,479,506,519,505,542,510,463,467,486,450,451,433,425,394,406,406,407,423]]
];

const spanA = [689,691,687,682,680,676,675,669,656,643,608,593,586,584,579,570,569,562,562,562,564,565,565,565,565,569,572,567,567,566,564,565,567,578,583,584,588,593,597,599,602,605,607,608,609,611,612,613,613,613,612,612,611,609,606,603,600,597,595,589,587,573,560,559,555,536,518,508,490,490,467,466,464,464,464,469,477,477,472,469,476,478,479,481,488,488,488,496,496,494,488,488,488,488,486,480,467,467,458,458,458];
const spanB = [734,733,726,720,709,693,693,693,693,693,665,650,643,643,639,632,631,630,630,630,630,630,630,630,630,630,630,630,630,630,630,622,621,609,593,593,593,593,593,593,593,593,593,593,593,592,591,590,589,587,583,576,572,572,572,572,572,572,572,572,572,572,572,572,572,572,562,553,541,541,524,524,524,524,524,524,524,524,524,524,524,524,524,524,524,524,524,524,524,524,524,515,502,502,502,502,502,502,502,502,502];

const macd = [847,848,850,852,853,857,860,863,866,866,869,870,873,878,881,881,877,873,871,868,864,864,864,863,861,858,862,862,862,859,859,855,851,849,845,842,839,836,833,830,829,825,820,815,813,807,807,809,813,820,829,839,845,852,856,856,859,861,861,863,863,865,869,869,865,862,862,860,858,855,849,842,840,838,837,837];
const signal = [841,842,844,845,847,849,851,854,856,858,859,860,862,865,867,870,872,873,873,873,872,871,870,869,868,867,865,864,864,863,862,861,859,857,854,851,849,846,843,840,837,833,829,826,822,818,816,816,817,819,822,826,831,836,842,847,851,854,856,858,861,862,863,863,862,862,861,860,858,856,855,852,850,848,845,843];

const points = values => values.map((y, n) => [n ? x(n - 1) : EDGE, y]);

function line(values, color) {
    add('polyline', { points: points(values).join(' '), fill: 'none', stroke: color, 'stroke-width': 1.2 });
}

function grid() {
    for (let p = 109; p <= 116; p++) {
        add('path', { d: `M${EDGE} ${priceY(p)}H1836`, stroke: '#444955' });
        add('text', { x: 83, y: priceY(p) + 5, 'text-anchor': 'end', class: 'axis' }, p.toFixed(2));
        add('text', { x: 1837, y: priceY(p) + 5, class: 'axis' }, p.toFixed(2));
    }
    for (let p = 108.5; p <= 116.25; p += 0.25) {
        if (p % 1 === 0) continue;
        const size = p % 0.5 === 0 ? 9 : 5;
        add('path', { d: `M${86 - size} ${priceY(p)}h${size}M1835 ${priceY(p)}h${size}`, stroke: '#444955' });
    }
    [0.5, 0, -0.5].forEach(v => {
        add('path', { d: `M${EDGE} ${macdY(v)}H1836`, stroke: '#444955' });
        add('text', { x: 83, y: macdY(v) + 5, 'text-anchor': 'end', class: 'axis' }, v.toFixed(1));
        add('text', { x: 1837, y: macdY(v) + 5, class: 'axis' }, v.toFixed(1));
    });
    [[471, '2018/09'], [821, '2018/10'], [1225, '2018/11']].forEach(([gx, label]) => {
        add('path', { d: `M${gx + 0.5} 221V930`, stroke: '#444955' });
        add('text', { x: gx - 2, y: 218, 'text-anchor': 'middle', class: 'axis' }, label);
        add('text', { x: gx - 2, y: 942, 'text-anchor': 'middle', class: 'axis' }, label);
    });
    add('path', { d: 'M20 793.5H1901', stroke: '#8c8e92' });
    add('text', { x: 87, y: 809, class: 'axis' }, 'MACD');
}

function drawCandles() {
    const colors = { u: '#f47676', d: '#7ad0f0', n: '#8cffff' };
    candles.forEach(([top, bottom, high, low, dir], i) => {
        const cx = Math.round(x(i)) + 0.5;
        add('path', { d: `M${cx} ${high}V${low}`, stroke: colors[dir] });
        add('rect', { x: cx - 7.5, y: top, width: 15, height: bottom - top, fill: colors[dir] });
    });
}

// the fill changes where the two spans cross
function cloud() {
    const a = points(spanA);
    const b = points(spanB);
    let run = [0];
    const at = (pts, t) => {
        const k = Math.floor(t);
        const next = pts[Math.min(k + 1, pts.length - 1)];
        return [pts[k][0] + (next[0] - pts[k][0]) * (t - k), pts[k][1] + (next[1] - pts[k][1]) * (t - k)];
    };
    const flush = (end, fill) => {
        const ids = run.concat(end);
        const top = ids.map(t => at(a, t));
        const low = ids.map(t => at(b, t)).reverse();
        add('polygon', { points: top.concat(low).join(' '), fill });
    };
    const shade = d => d < 0 ? 'rgba(196,192,192,0.5)' : 'rgba(196,192,192,0.32)';
    for (let n = 1; n < a.length; n++) {
        const before = a[n - 1][1] - b[n - 1][1];
        const after = a[n][1] - b[n][1];
        if (before !== 0 && before * after <= 0) {
            const t = n - 1 + before / (before - after);
            flush(t, shade(before));
            run = [t];
        }
        run.push(n);
        if (n === a.length - 1) flush([], shade(after));
    }
}

function marks() {
    [[425, 544, '08/29', '111.825', 'peak'], [881, 353, '10/04', '114.547', 'peak'], [1355, 377, '11/12', '114.204', 'peak'],
     [320, 694, '08/21', '109.775', 'bottom'], [549, 651, '09/07', '110.382', 'bottom'], [1162, 581, '10/26', '111.378', 'bottom']
    ].forEach(([mx, my, day, price, kind]) => {
        const ty = kind === 'peak' ? my - 19 : my + 15;
        add('rect', { x: mx - 3, y: my - 3, width: 6, height: 6, class: kind });
        add('text', { x: mx - 1, y: ty, class: kind }, day);
        add('text', { x: mx - 1, y: ty + 14, class: kind }, price);
    });
    [[416, 501, '111.825円'], [855, 316, '114.547円'], [1343, 337, '114.204円'], [1403, 462, '113.296円'],
     [304, 748, '109.775円'], [533, 713, '110.382円'], [1147, 636, '111.378円']
    ].forEach(([nx, ny, label]) => add('text', { x: nx, y: ny, class: 'price-note' }, label));
    [[110, '一目均衡表とボリバン21日線とMACD'], [610, '11月'], [680, '15日'], [749, '木曜日'], [839, '午前'], [902, '6時'], [955, '28分']
    ].forEach(([nx, label]) => add('text', { x: nx, y: 234, class: 'title-note' }, label));
}

grid();
drawCandles();
series.forEach(([color, values]) => line(values, color));
cloud();
line(spanA, '#e0dc40');
line(spanB, '#e88828');
line(macd, '#96dc64');
line(signal, '#f09038');
marks();
```
